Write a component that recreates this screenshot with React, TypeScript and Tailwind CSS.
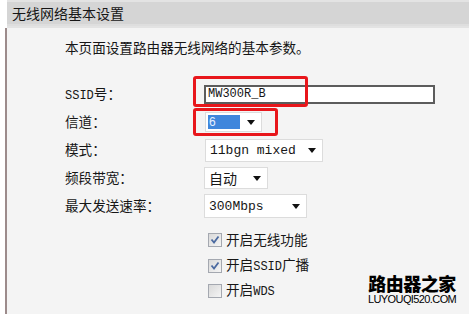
import React from "react";

const Arrow = () => (
  <svg width="8" height="5" viewBox="0 0 8 5" className="shrink-0">
    <path d="M0 0 H8 L4 5 Z" fill="#111" />
  </svg>
);

const CheckBox = ({ checked }: { checked: boolean }) => (
  <svg width="14" height="14" viewBox="0 0 14 14" className="shrink-0">
    <defs>
      <linearGradient id={checked ? "cbg1" : "cbg0"} x1="0" y1="0" x2="1" y2="1">
        <stop offset="0" stopColor="#d8d8d8" />
        <stop offset="1" stopColor="#f6f6f6" />
      </linearGradient>
    </defs>
    <rect x="0.5" y="0.5" width="13" height="13" fill={`url(#${checked ? "cbg1" : "cbg0"})`} stroke="#a4a8b0" />
    {checked && (
      <path d="M3.5 6.5 L6 9.5 L10.5 3.5" fill="none" stroke="#4b6aa0" strokeWidth="1.8" />
    )}
  </svg>
);

export default function App() {
  const cjk = "font-['Noto_Sans_CJK_SC',sans-serif]";
  const mono = "font-['Liberation_Mono',monospace]";
  return (
    <div className={`relative w-[469px] h-[314px] overflow-hidden bg-white text-[#161616] ${cjk}`}>
      <div className="ml-[7px] h-[28px] bg-[#e3e3e3] pt-[2px]">
        <div className="h-[24px] bg-[#d5d5d5] border-b-2 border-[#dedede] flex items-center pl-[5px] text-[14px] leading-none">
          无线网络基本设置
        </div>
      </div>
      <div className="ml-[5px] h-[286px] border-l-2 border-[#9c8b8b] bg-[#f4f4f4] pl-[58px]">
        <div className="h-[40px] flex items-center text-[13.6px] leading-none">
          本页面设置路由器无线网络的基本参数。
        </div>
        <div className="mt-[12px] flex flex-col text-[13.6px] leading-none">
          <div className="h-[28px] flex items-center">
            <div className="w-[139px]">
              <span className={`${mono} text-[12px]`}>SSID</span>号：
            </div>
            <div className="relative">
              <div className={`w-[231px] h-[19px] border-2 border-[#5c5c5c] bg-white flex items-center pl-[2px] ${mono} text-[12px]`}>
                MW300R_B
              </div>
              <div className="absolute left-[-11px] top-[-9px] w-[115px] h-[31px] border-[3px] border-[#e8161b] rounded-[3px]" />
            </div>
          </div>
          <div className="h-[28px] flex items-center">
            <div className="w-[139px]">信道：</div>
            <div className="relative">
              <div className="w-[57px] h-[20px] ml-[1px] border border-[#dcdcdc] bg-white flex items-center pl-[2px] pr-[6px] justify-between">
                <span className="w-[32px] h-[14px] bg-[#3f86dc] text-[#e8f0ff] text-[12px] leading-[14px] pl-[1px] font-['Liberation_Sans',sans-serif]">6</span>
                <Arrow />
              </div>
              <div className="absolute left-[-11px] top-[-4px] w-[85px] h-[28px] border-[3px] border-[#e8161b] rounded-[3px]" />
            </div>
          </div>
          <div className="h-[28px] flex items-center">
            <div className="w-[139px]">模式：</div>
            <div className={`w-[118px] h-[23px] ml-[1px] border border-[#dcdcdc] bg-white flex items-center justify-between pl-[4px] pr-[6px] ${mono} text-[13px]`}>
              <span>11bgn mixed</span>
              <Arrow />
            </div>
          </div>
          <div className="h-[28px] flex items-center">
            <div className="w-[139px]">频段带宽：</div>
            <div className="w-[64px] h-[22px] border border-[#dcdcdc] bg-white flex items-center justify-between pl-[4px] pr-[6px] text-[14px]">
              <span>自动</span>
              <Arrow />
            </div>
          </div>
          <div className="h-[28px] flex items-center">
            <div className="w-[139px]">最大发送速率：</div>
            <div className={`w-[103px] h-[24px] border border-[#dcdcdc] bg-white flex items-center justify-between pl-[4px] pr-[6px] ${mono} text-[13px]`}>
              <span>300Mbps</span>
              <Arrow />
            </div>
          </div>
          <div className="mt-[7px] flex flex-col pl-[143px]">
            <div className="h-[26px] flex items-center gap-[4px]">
              <CheckBox checked />
              <span>开启无线功能</span>
            </div>
            <div className="h-[25px] flex items-center gap-[4px]">
              <CheckBox checked />
              <span>
                开启<span className={`${mono} text-[12px]`}>SSID</span>广播
              </span>
            </div>
            <div className="h-[25px] flex items-center gap-[4px]">
              <CheckBox checked={false} />
              <span>
                开启<span className={`${mono} text-[12px]`}>WDS</span>
              </span>
            </div>
          </div>
        </div>
      </div>
      <div className="absolute left-[368px] top-[273px] flex flex-col items-center text-black">
        <div className="text-[18px] font-black leading-[20px] tracking-[-0.5px]">路由器之家</div>
        <div className="font-['Liberation_Sans',sans-serif] text-[11px] leading-[12px] tracking-[-0.6px]">LUYOUQI520.COM</div>
      </div>
    </div>
  );
}
